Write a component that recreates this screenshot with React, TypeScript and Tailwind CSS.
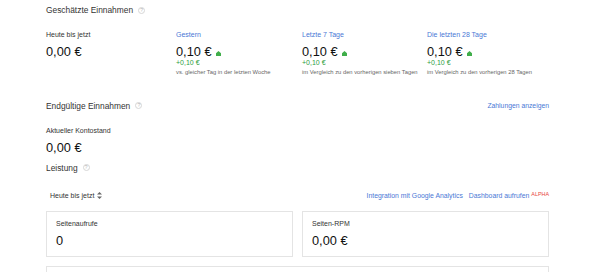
import React from "react";

// small grey help bubble next to section titles
const Help = () => (
  <span className="ml-[5px] inline-flex h-[7px] w-[7px] items-center justify-center rounded-full border border-[#d6d6d6] text-[5px] leading-none text-[#b5b5b5]">
    ?
  </span>
);

const UpArrow = () => (
  <svg width="5" height="5" viewBox="0 0 5 5" className="ml-[4px] mt-[2px]">
    <polygon points="2.5,0 5,2.2 5,5 0,5 0,2.2" fill="#3fae4a" />
  </svg>
);

const SortIcon = () => (
  <svg width="5" height="7" viewBox="0 0 5 7" className="ml-[3px]">
    <polygon points="2.5,0 5,2.6 0,2.6" fill="#666" />
    <polygon points="2.5,7 5,4.4 0,4.4" fill="#666" />
  </svg>
);

type Stat = { label: string; value: string; diff?: string; note?: string };

const stats: Stat[] = [
  { label: "Heute bis jetzt", value: "0,00 €" },
  { label: "Gestern", value: "0,10 €", diff: "+0,10 €", note: "vs. gleicher Tag in der letzten Woche" },
  { label: "Letzte 7 Tage", value: "0,10 €", diff: "+0,10 €", note: "im Vergleich zu den vorherigen sieben Tagen" },
  { label: "Die letzten 28 Tage", value: "0,10 €", diff: "+0,10 €", note: "im Vergleich zu den vorherigen 28 Tagen" },
];

const Heading = ({ children }: { children: React.ReactNode }) => (
  <h2 className="flex items-center text-[8.4px] leading-[12px] text-[#333]">
    {children}
    <Help />
  </h2>
);

export default function App() {
  return (
    <div className="h-[272px] w-[590px] overflow-hidden bg-white pl-[46px] pr-[41px] font-['Liberation_Sans',Arial,sans-serif] text-[#222]">
      {/* estimated earnings */}
      <div className="mt-[4px]">
        <Heading>Geschätzte Einnahmen</Heading>
      </div>
      <div className="mt-[14px] grid grid-cols-[130px_126px_125px_1fr]">
        {stats.map((s, i) => (
          <div key={s.label} className="flex flex-col">
            <span className={`text-[7px] leading-[10px] ${i === 0 ? "text-[#333]" : "text-[#4a78d6]"}`}>
              {s.label}
            </span>
            <div className="mt-[5px] flex items-center text-[12.8px] leading-[14px] text-[#111]">
              {s.value}
              {s.diff && <UpArrow />}
            </div>
            {s.diff && <span className="text-[7px] leading-[8px] text-[#2e9e3e]">{s.diff}</span>}
            {s.note && <span className="mt-[0.5px] whitespace-nowrap text-[5.8px] leading-[8px] text-[#666]">{s.note}</span>}
          </div>
        ))}
      </div>

      {/* final earnings */}
      <div className="mt-[24px] flex items-center justify-between">
        <Heading>Endgültige Einnahmen</Heading>
        <a className="text-[6.8px] leading-[10px] text-[#4a78d6]">Zahlungen anzeigen</a>
      </div>
      <div className="mt-[14px] text-[7px] leading-[10px] text-[#333]">Aktueller Kontostand</div>
      <div className="mt-[5px] text-[12.8px] leading-[14px] text-[#111]">0,00 €</div>

      {/* performance */}
      <div className="mt-[7px]">
        <Heading>Leistung</Heading>
      </div>
      <div className="mt-[17px] flex items-center justify-between">
        <div className="ml-[4px] flex items-center text-[7px] leading-[10px] text-[#333]">
          Heute bis jetzt
          <SortIcon />
        </div>
        <div className="flex items-center text-[6.85px] leading-[10px] text-[#4a78d6]">
          <a>Integration mit Google Analytics</a>
          <a className="ml-[6px]">Dashboard aufrufen</a>
          <span className="ml-[2px] -mt-[4px] text-[5.4px] leading-[6px] text-[#e8453c]">ALPHA</span>
        </div>
      </div>
      <div className="mt-[10px] grid grid-cols-2 gap-[9px]">
        {[
          { label: "Seitenaufrufe", value: "0" },
          { label: "Seiten-RPM", value: "0,00 €" },
        ].map((c) => (
          <div key={c.label} className="h-[46px] border border-[#e4e4e4] px-[9px] pt-[7px]">
            <div className="text-[7px] leading-[10px] text-[#333]">{c.label}</div>
            <div className="mt-[5px] text-[12.8px] leading-[14px] text-[#111]">{c.value}</div>
          </div>
        ))}
      </div>
      <div className="mt-[9px] h-[20px] border border-[#e4e4e4]" />
    </div>
  );
}
